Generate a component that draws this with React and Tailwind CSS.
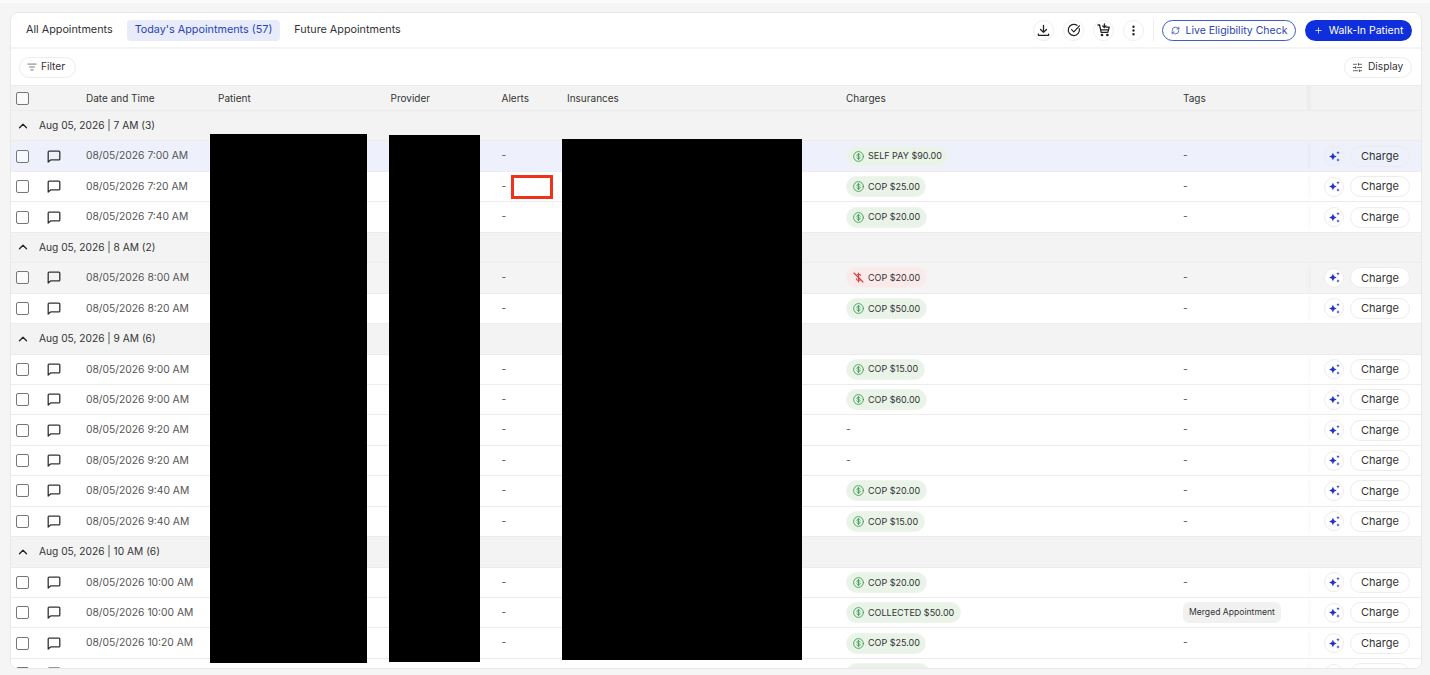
import React from 'react';
import { ChevronUp, EllipsisVertical, ListFilter, Plus, RefreshCw, SlidersHorizontal } from 'lucide-react';

const groups = [
  {
    label: 'Aug 05, 2026 | 7 AM (3)',
    rows: [
      { time: '08/05/2026 7:00 AM', charge: 'SELF PAY $90.00', active: true },
      { time: '08/05/2026 7:20 AM', charge: 'COP $25.00' },
      { time: '08/05/2026 7:40 AM', charge: 'COP $20.00' },
    ],
  },
  {
    label: 'Aug 05, 2026 | 8 AM (2)',
    rows: [
      { time: '08/05/2026 8:00 AM', charge: 'COP $20.00', unpaid: true },
      { time: '08/05/2026 8:20 AM', charge: 'COP $50.00' },
    ],
  },
  {
    label: 'Aug 05, 2026 | 9 AM (6)',
    rows: [
      { time: '08/05/2026 9:00 AM', charge: 'COP $15.00' },
      { time: '08/05/2026 9:00 AM', charge: 'COP $60.00' },
      { time: '08/05/2026 9:20 AM' },
      { time: '08/05/2026 9:20 AM' },
      { time: '08/05/2026 9:40 AM', charge: 'COP $20.00' },
      { time: '08/05/2026 9:40 AM', charge: 'COP $15.00' },
    ],
  },
  {
    label: 'Aug 05, 2026 | 10 AM (6)',
    rows: [
      { time: '08/05/2026 10:00 AM', charge: 'COP $20.00' },
      { time: '08/05/2026 10:00 AM', charge: 'COLLECTED $50.00', tag: 'Merged Appointment' },
      { time: '08/05/2026 10:20 AM', charge: 'COP $25.00' },
      { time: '08/05/2026 10:20 AM', charge: 'COP $120.00' },
    ],
  },
];

const gridCols = 'grid grid-cols-[67px_132px_172.5px_111px_65.5px_279px_337px_136px_110px]';

function Checkbox() {
  return <span className="block w-[13px] h-[13px] rounded-[2px] border-[1.5px] border-[#777777] bg-white/60" />;
}

function CircleIcon({ children }) {
  return (
    <button className="w-[21px] h-[21px] rounded-full border border-[#eeeeee] bg-white flex items-center justify-center text-[#222222]">
      {children}
    </button>
  );
}

function DownloadIcon() {
  return (
    <svg width="13" height="13" viewBox="0 0 14 14" fill="none" stroke="currentColor" strokeWidth="1.4" strokeLinecap="round" strokeLinejoin="round">
      <path d="M7 1.5v7.5M3.8 5.9L7 9l3.2-3.1" />
      <path d="M1.5 10.8v1.4h11v-1.4" />
    </svg>
  );
}

function CheckCircleIcon() {
  return (
    <svg width="14" height="14" viewBox="0 0 14 14" fill="none" stroke="currentColor" strokeWidth="1.2" strokeLinecap="round" strokeLinejoin="round">
      <path d="M12.3 5.6A5.6 5.6 0 1 1 10 2.3" />
      <path d="M4.6 6.6l2.2 2.2 5.6-6" />
    </svg>
  );
}

function CartIcon() {
  return (
    <svg width="14" height="14" viewBox="0 0 14 14" fill="none" stroke="currentColor" strokeWidth="1.3" strokeLinecap="round" strokeLinejoin="round">
      <path d="M1 2h1.6l1.6 7.4h6.6l1.4-5.2H9.6" />
      <path d="M4 6.8h7.6" />
      <path d="M7.4 0.8v3.6M5.8 3l1.6 1.6L9 3" />
      <circle cx="5" cy="12" r="0.7" fill="currentColor" />
      <circle cx="10.4" cy="12" r="0.7" fill="currentColor" />
    </svg>
  );
}

function CommentIcon() {
  return (
    <svg width="14" height="13" viewBox="0 0 14 13" fill="none" stroke="#333333" strokeWidth="1.3" strokeLinejoin="round">
      <path d="M1.2 2c0-.5.4-.9.9-.9h9.8c.5 0 .9.4.9.9v7c0 .5-.4.9-.9.9H3.6l-2.4 2.2z" />
    </svg>
  );
}

function SparkIcon() {
  return (
    <svg width="11" height="11" viewBox="0 0 11 11" fill="#2334c9">
      <path d="M3.9 1.7l1.2 2.6 2.6 1.2-2.6 1.2-1.2 2.6-1.2-2.6L0.1 5.5l2.6-1.2z" />
      <path d="M9 0.1l.5 1.2 1.2.5-1.2.5-.5 1.2-.5-1.2-1.2-.5 1.2-.5z" />
      <path d="M9 7.3l.5 1.2 1.2.5-1.2.5-.5 1.2-.5-1.2-1.2-.5 1.2-.5z" />
    </svg>
  );
}

function DollarCircle() {
  return (
    <svg width="11" height="11" viewBox="0 0 11 11" fill="none" stroke="#3f9d57" strokeWidth="0.9" strokeLinecap="round" className="shrink-0">
      <circle cx="5.5" cy="5.5" r="4.9" />
      <path d="M7.1 4.1c-.2-.6-.8-.9-1.6-.9-.9 0-1.6.4-1.6 1.1 0 1.6 3.3.8 3.3 2.4 0 .7-.7 1.1-1.7 1.1-.8 0-1.5-.4-1.7-1M5.5 2.4v6.2" />
    </svg>
  );
}

function DollarOff() {
  return (
    <svg width="11" height="11" viewBox="0 0 11 11" fill="none" stroke="#d63b3b" strokeWidth="1.1" strokeLinecap="round" className="shrink-0">
      <path d="M1 1l9 9" />
      <path d="M7.6 3.2c-.4-.6-1.1-.9-2-.9-.5 0-1 .1-1.3.3M3.4 6.8c.2 1.1 1 1.7 2.2 1.7.7 0 1.3-.2 1.7-.6M5.6 1v9" />
    </svg>
  );
}

function ChargePill({ charge, unpaid }) {
  return (
    <span className={`inline-flex items-center gap-[4px] h-[21px] pl-[6px] pr-[5.5px] rounded-full border text-[9px] whitespace-nowrap text-[#333333] ${unpaid ? 'bg-[#fbeaea] border-[#f7eeee]' : 'bg-[#e9f3e8] border-[#eff5ee]'}`}>
      {unpaid ? <DollarOff /> : <DollarCircle />}
      {charge}
    </span>
  );
}

function AppointmentRow({ row }) {
  const bg = row.active ? 'bg-[#eef1fc]' : row.unpaid ? 'bg-[#f4f4f4]' : 'bg-white';
  return (
    <div className={`${gridCols} h-[30.45px] items-center border-b border-[#ececec] text-[10.3px] text-[#555555] ${bg}`}>
      <div className="flex items-center pl-[5px] gap-[18px]">
        <Checkbox />
        <CommentIcon />
      </div>
      <div className="pl-2 whitespace-nowrap">{row.time}</div>
      <div />
      <div />
      <div className="pl-2">-</div>
      <div />
      <div className="pl-2">{row.charge ? <ChargePill charge={row.charge} unpaid={row.unpaid} /> : '-'}</div>
      <div className="pl-2 whitespace-nowrap">
        {row.tag ? <span className="inline-flex items-center h-[21px] px-[6px] rounded-md bg-[#f1f1f1] text-[8.6px] text-[#333333]">{row.tag}</span> : '-'}
      </div>
      <div className={`h-full flex items-center gap-[6px] pl-[13px] shadow-[-5px_0_4px_-2px_rgba(0,0,0,0.025)] ${bg}`}>
        <span className={`w-[20px] h-[20px] rounded-full border border-[#ececec] flex items-center justify-center ${row.active ? '' : 'bg-white'}`}>
          <SparkIcon />
        </span>
        <span className={`w-[60px] h-[21px] rounded-full border border-[#ececec] flex items-center justify-center text-[11px] text-[#333333] ${row.active ? '' : 'bg-white'}`}>
          Charge
        </span>
      </div>
    </div>
  );
}

function GroupRow({ label }) {
  return (
    <div className={`${gridCols} h-[30.45px] items-center border-b border-[#ececec] bg-[#f3f3f3] text-[#333333]`}>
      <div className="col-span-9 flex items-center gap-[9.5px] pl-[4.5px] text-[10.2px] whitespace-nowrap">
        <ChevronUp size={14} strokeWidth={2.2} className="text-[#222222]" />
        {label}
      </div>
    </div>
  );
}

export default function App() {
  return (
    <div className="relative w-[1430px] h-[675px] overflow-hidden bg-[#f5f5f5] border-t-[3px] border-[#fbfbfb] pt-[9px] pl-[10px]" style={{ fontFamily: 'Inter, "Liberation Sans", sans-serif' }}>
      <div className="w-[1412px] h-[656.5px] rounded-lg border border-[#e8e8e8] bg-white overflow-hidden flex flex-col">

        {/* tabs and actions */}
        <div className="h-[36px] shrink-0 flex items-center justify-between border-b-2 border-[#f4f4f4] pl-[7px] pr-[9px]">
          <div className="flex items-center gap-[6px] text-[10.8px] text-[#333333]">
            <span className="px-[8px] pt-[1px]">All Appointments</span>
            <span className="px-[8px] pt-[1px] h-[21px] flex items-center rounded bg-[#e7ebfa] text-[#2a44b8]">Today's Appointments (57)</span>
            <span className="px-[8px] pt-[1px]">Future Appointments</span>
          </div>
          <div className="flex items-center">
            <div className="flex items-center gap-[9px] pr-[9px] border-r border-[#eeeeee]">
              <CircleIcon><DownloadIcon /></CircleIcon>
              <CircleIcon><CheckCircleIcon /></CircleIcon>
              <CircleIcon><CartIcon /></CircleIcon>
              <CircleIcon><EllipsisVertical size={13} strokeWidth={2.4} /></CircleIcon>
            </div>
            <button className="ml-[8px] w-[134px] h-[21px] pt-[1px] rounded-full border border-[#3f5bc4] flex items-center justify-center gap-[6px] text-[10.5px] text-[#2a44b8] bg-white">
              <RefreshCw size={9} strokeWidth={2} />
              Live Eligibility Check
            </button>
            <button className="ml-[9px] w-[107px] h-[21px] pt-[1px] rounded-full bg-[#0f2fdc] flex items-center justify-center gap-[6px] text-[10.5px] text-white">
              <Plus size={9} strokeWidth={2} />
              Walk-In Patient
            </button>
          </div>
        </div>

        {/* filter bar */}
        <div className="h-[36px] shrink-0 flex items-center justify-between pl-[8px] pr-[9px]">
          <button className="h-[21px] w-[57px] pl-[7px] rounded-full border border-[#ececec] flex items-center gap-[4px] text-[10.2px] text-[#333333]">
            <ListFilter size={10} strokeWidth={1.6} />
            Filter
          </button>
          <button className="h-[21px] w-[68px] pl-[7px] rounded-full border border-[#ececec] flex items-center gap-[5px] text-[10.2px] text-[#333333]">
            <SlidersHorizontal size={11} strokeWidth={1.6} />
            Display
          </button>
        </div>

        {/* table */}
        <div className={`${gridCols} h-[26px] shrink-0 items-center border-y border-[#ececec] bg-[#f3f3f3] text-[10px] text-[#333333]`}>
          <div className="pl-[5px]"><Checkbox /></div>
          <div className="pl-2">Date and Time</div>
          <div className="pl-2">Patient</div>
          <div className="pl-2">Provider</div>
          <div className="pl-2">Alerts</div>
          <div className="pl-2">Insurances</div>
          <div className="pl-2">Charges</div>
          <div className="pl-2">Tags</div>
          <div className="h-full border-l-[4px] border-[#ededed] -ml-[4px]" />
        </div>
        <div className="flex-1 overflow-hidden">
          {groups.map((group) => (
            <div key={group.label}>
              <GroupRow label={group.label} />
              {group.rows.map((row, i) => (
                <AppointmentRow key={i} row={row} />
              ))}
            </div>
          ))}
        </div>
      </div>

      {/* redactions and highlight lying over the table */}
      <div className="absolute left-[210px] top-[131px] w-[157px] h-[529px] bg-black" />
      <div className="absolute left-[389px] top-[132px] w-[91px] h-[527px] bg-black" />
      <div className="absolute left-[562px] top-[136px] w-[240px] h-[521px] bg-black" />
      <div className="absolute left-[511px] top-[172px] w-[42px] h-[24px] border-[3px] border-[#f0321a] bg-white" />
    </div>
  );
}
